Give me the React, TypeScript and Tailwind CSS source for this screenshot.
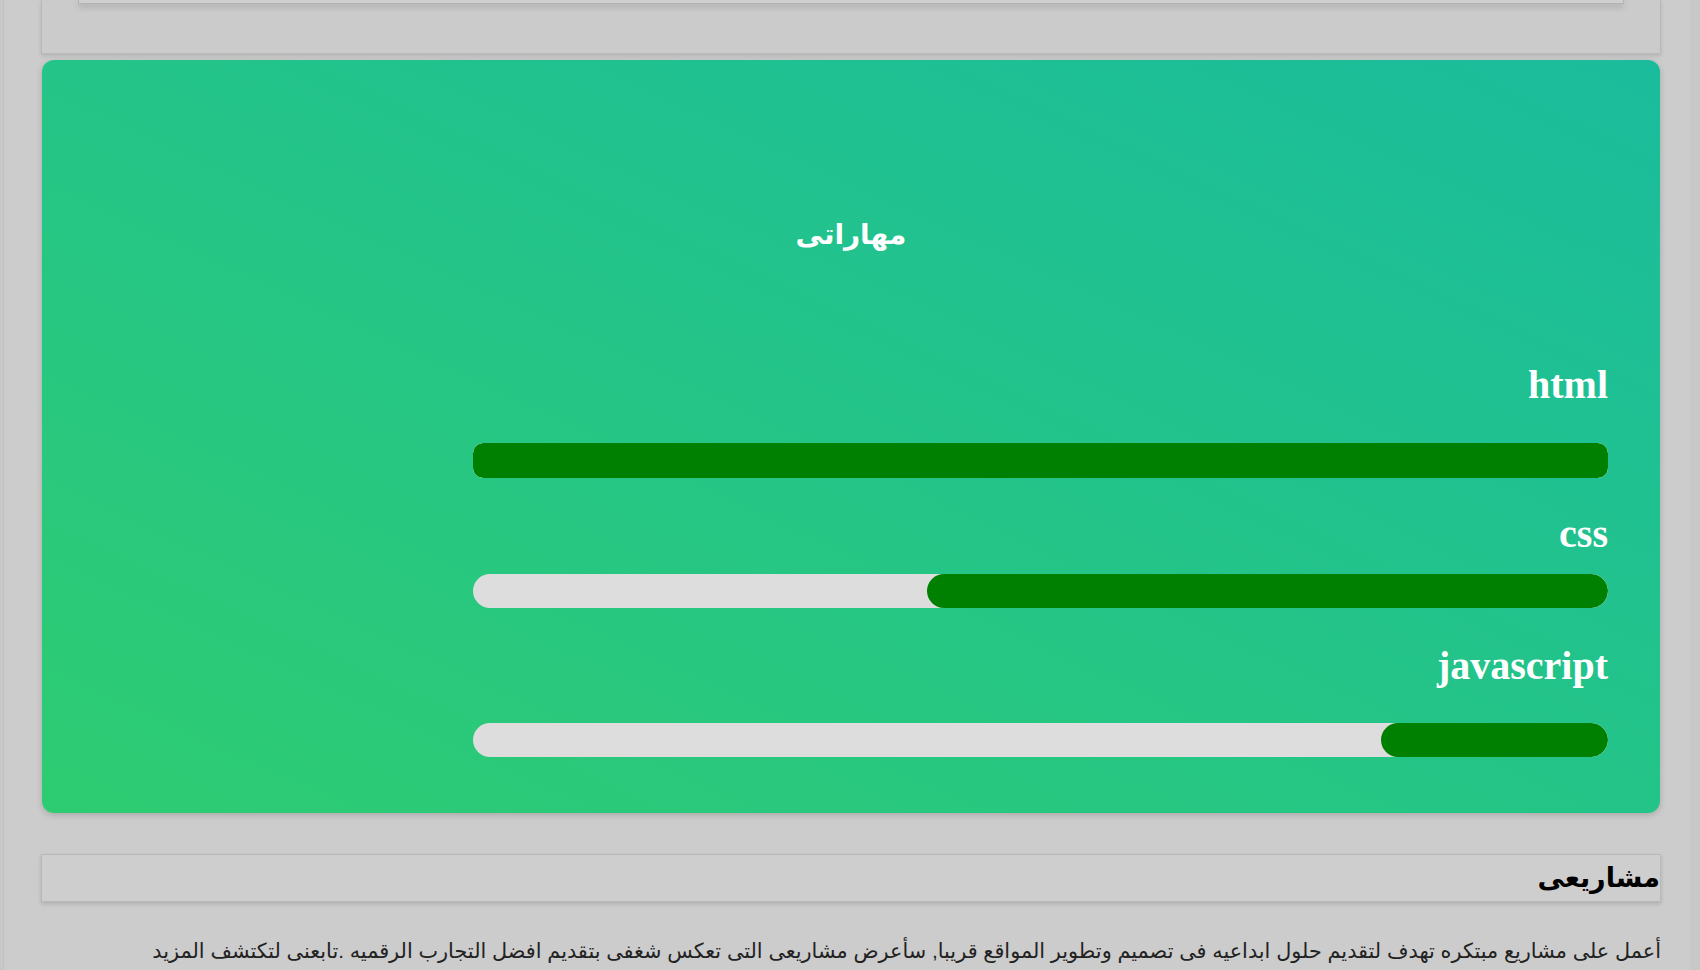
const skills = [
  { name: 'html', value: 100 },
  { name: 'css', value: 60 },
  { name: 'javascript', value: 20 },
];

function SkillBar({ value, rounded }: { value: number; rounded: string }) {
  return (
    <div className={`flex w-full bg-[#dddddd] overflow-hidden ${rounded}`}>
      <div className={`h-full bg-[#008000] ${rounded}`} style={{ width: `${value}%` }} />
    </div>
  );
}

function SkillLabel({ name, className }: { name: string; className: string }) {
  return (
    <div
      className={`h-[40px] text-[40px] leading-[40px] font-bold text-white font-['Liberation_Serif',serif] ${className}`}
    >
      {name}
    </div>
  );
}

export default function App() {
  const [html, css, js] = skills;

  return (
    <div dir="rtl" className="min-h-[970px] bg-[#c8c8c8] font-['Liberation_Sans','DejaVu_Sans',sans-serif]">
      <div className="ml-[3px] mr-[10px] min-h-[970px] bg-[#cccccc] pl-[37px] pr-[29px] border-l border-[#c2c2c2]">
        {/* previous section, scrolled mostly out of view */}
        <div className="h-[54px] border-x border-b border-[#b9b9b9] bg-[#cbcbcb] shadow-[0_2px_4px_rgba(0,0,0,0.12)]">
          <div className="mx-[36px] h-[4px] border-x border-b border-[#b3b3b3] bg-[#cfcfcf] shadow-[0_3px_6px_rgba(0,0,0,0.18)]" />
        </div>

        {/* skills card */}
        <section className="mt-[6px] mx-[1px] rounded-[12px] bg-linear-to-tr from-[#2ecc71] to-[#1abc9c] px-[52px] pt-[155px] pb-[56px] shadow-[0_2px_6px_rgba(0,0,0,0.18)]">
          <h2 className="h-[40px] text-center text-[28px] leading-[40px] font-bold text-white">
            مهاراتی
          </h2>
          <div className="mt-[110px] w-[1135px]">
            <SkillLabel name={html.name} className="" />
            <div className="mt-[38px] h-[35px]">
              <SkillBar value={html.value} rounded="h-full rounded-[10px]" />
            </div>
            <SkillLabel name={css.name} className="mt-[36px]" />
            <div className="mt-[20px] h-[34px]">
              <SkillBar value={css.value} rounded="h-full rounded-full" />
            </div>
            <SkillLabel name={js.name} className="mt-[38px]" />
            <div className="mt-[37px] h-[34px]">
              <SkillBar value={js.value} rounded="h-full rounded-full" />
            </div>
          </div>
        </section>

        {/* projects */}
        <div className="mt-[41px] h-[48px] border border-[#b9b9b9] bg-[#cecece] shadow-[0_2px_4px_rgba(0,0,0,0.15)]">
          <h2 className="text-[27px] leading-[46px] font-bold text-black">مشاريعى</h2>
        </div>
        <p className="mt-[34px] text-[20.8px] leading-[30px] text-[#222222] whitespace-nowrap">
          أعمل على مشاريع مبتكره تهدف لتقديم حلول ابداعيه فى تصميم وتطوير المواقع قريبا, سأعرض مشاريعى التى تعكس شغفى بتقديم افضل التجارب الرقميه .تابعنى لتكتشف المزيد
        </p>
      </div>
    </div>
  );
}
